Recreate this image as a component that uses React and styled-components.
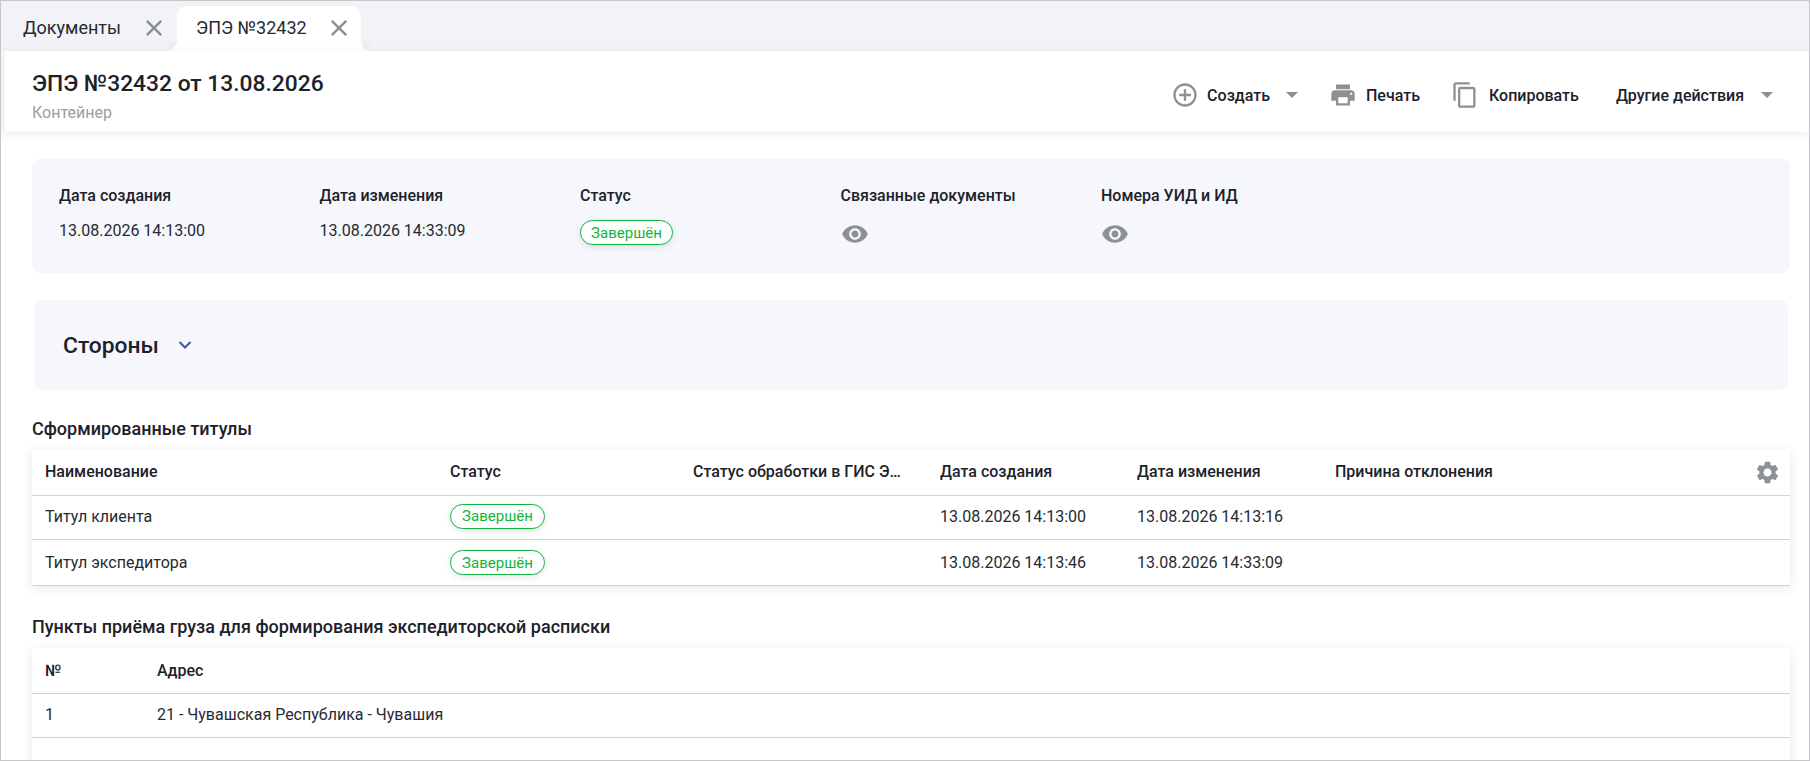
import React from "react";
import styled, { createGlobalStyle } from "styled-components";

const Global = createGlobalStyle`
  html, body { margin: 0; padding: 0; background: #fff; }
  body { font-family: Roboto, "Noto Sans", sans-serif; color: #1d2129; }
  * { box-sizing: border-box; }
`;

const Frame = styled.div`
  width: 1810px;
  height: 761px;
  border: 1px solid #c4c6ca;
  overflow: hidden;
  background: #fff;
  display: flex;
  flex-direction: column;
`;

const TabBar = styled.div`
  height: 50px;
  flex: none;
  background: #f1f3f7;
  display: flex;
  padding-top: 5px;
`;

const Tab = styled.div`
  position: relative;
  height: 45px;
  width: ${(p) => p.$width}px;
  padding: 0 0 2px ${(p) => p.$pad}px;
  display: flex;
  align-items: center;
  justify-content: space-between;
  font-size: 18px;
  color: #262a31;
  background: ${(p) => (p.$active ? "#fff" : "transparent")};
  border-radius: ${(p) => (p.$active ? "10px 10px 0 0" : "0")};
  ${(p) =>
    p.$active &&
    `
    &::before, &::after {
      content: "";
      position: absolute;
      bottom: 0;
      width: 10px;
      height: 10px;
      background: radial-gradient(circle at var(--cx) 0, #eceef3 9.5px, #fff 10px);
    }
    &::before { left: -10px; --cx: 0; }
    &::after { right: -10px; --cx: 100%; }
  `}
`;

const CloseIcon = styled.svg`
  width: 18px;
  height: 18px;
  flex: none;
  margin-right: ${(p) => p.$mr}px;
  stroke: #8a8e94;
  stroke-width: 2.4;
  fill: none;
`;

const HeaderWrap = styled.div`
  flex: none;
  background: #f1f3f7;
  padding-left: 4px;
  position: relative;
  z-index: 2;
  box-shadow: 0 2px 8px rgba(40, 50, 70, 0.1);
`;

const Header = styled.header`
  height: 81px;
  background: #fff;
  display: flex;
  justify-content: space-between;
  padding-left: 27px;
`;

const TitleBlock = styled.div`
  display: flex;
  flex-direction: column;
  padding-top: 20px;
`;

const Title = styled.h1`
  margin: 0;
  font-size: 22.8px;
  line-height: 26px;
  font-weight: 500;
  color: #1d2129;
`;

const Subtitle = styled.div`
  font-size: 16px;
  line-height: 20px;
  margin-top: 6px;
  color: #9b9ea3;
`;

const Toolbar = styled.div`
  display: flex;
  align-items: center;
  padding-top: 7px;
  padding-right: 36px;
`;

const ToolButton = styled.div`
  display: flex;
  align-items: center;
  font-size: 16px;
  font-weight: 500;
  color: #1d2129;
  margin-left: ${(p) => p.$ml}px;
`;

const ToolIcon = styled.svg`
  width: 28px;
  height: 28px;
  fill: #8d9095;
  margin-right: ${(p) => p.$mr}px;
  flex: none;
`;

const Caret = styled.span`
  width: 0;
  height: 0;
  margin-left: ${(p) => p.$ml}px;
  border-left: 6px solid transparent;
  border-right: 6px solid transparent;
  border-top: 6px solid #8d9095;
`;

const Content = styled.main`
  flex: 1;
  min-height: 0;
  padding: 27px 19px 0 31px;
  display: flex;
  flex-direction: column;
`;

const InfoCard = styled.section`
  flex: none;
  height: 114px;
  background: #f5f7fc;
  border-radius: 8px;
  padding: 27px 27px 0;
  display: grid;
  grid-template-columns: repeat(5, 260.5px);
`;

const InfoColumn = styled.div`
  display: flex;
  flex-direction: column;
`;

const InfoLabel = styled.div`
  font-size: 16px;
  line-height: 20px;
  font-weight: 500;
  color: #1d2129;
`;

const InfoValue = styled.div`
  font-size: 16px;
  line-height: 20px;
  margin-top: 15px;
  color: #262a31;
`;

const Badge = styled.span`
  display: inline-flex;
  align-items: center;
  justify-content: center;
  align-self: flex-start;
  height: 25px;
  width: ${(p) => p.$width}px;
  border: 1px solid #10b53f;
  border-radius: 13px;
  background: #fff;
  color: #10b53f;
  font-size: 15px;
  box-shadow: 0 2px 6px rgba(40, 50, 70, 0.12);
`;

const InfoBadge = styled(Badge)`
  margin-top: 14px;
`;

const EyeIcon = styled.svg`
  width: 28px;
  height: 28px;
  fill: #8d9095;
  margin-top: 14px;
`;

const SidesCard = styled.section`
  flex: none;
  height: 90px;
  margin: 27px 2px 0;
  background: #f5f7fc;
  border-radius: 8px;
  display: flex;
  align-items: center;
  padding-left: 29px;
  font-size: 22.8px;
  font-weight: 500;
  color: #1d2129;
`;

const Chevron = styled.svg`
  width: 14px;
  height: 10px;
  margin-left: 19px;
  fill: none;
  stroke: #3a5aa8;
  stroke-width: 2;
`;

const SectionTitle = styled.h2`
  flex: none;
  margin: ${(p) => p.$mt}px 0 0;
  font-size: 18px;
  line-height: 22px;
  font-weight: 500;
  color: #1d2129;
`;

const Table = styled.div`
  flex: none;
  margin-top: ${(p) => p.$mt}px;
  width: 1758px;
  background: #fff;
  box-shadow: 0 2px 10px rgba(40, 50, 70, 0.11);
`;

const Row = styled.div`
  display: grid;
  grid-template-columns: ${(p) => p.$cols};
  height: ${(p) => p.$h}px;
  padding-bottom: ${(p) => p.$pb || 0}px;
  align-items: center;
  border-bottom: 1px solid #d0d2d5;
  position: relative;
`;

const HeadCell = styled.div`
  padding: 0 20px 0 13px;
  font-size: 16px;
  font-weight: 500;
  color: #1d2129;
  white-space: nowrap;
  overflow: hidden;
  text-overflow: ellipsis;
`;

const Cell = styled.div`
  padding-left: 13px;
  font-size: 16px;
  color: #262a31;
  white-space: nowrap;
`;

const GearIcon = styled.svg`
  position: absolute;
  right: 9px;
  top: 9px;
  width: 27px;
  height: 27px;
  fill: #8d9095;
`;

const Close = ({ mr }) => (
  <CloseIcon $mr={mr} viewBox="0 0 18 18">
    <path d="M1.8 1.8 16.2 16.2M16.2 1.8 1.8 16.2" />
  </CloseIcon>
);

const Eye = () => (
  <EyeIcon viewBox="0 0 24 24">
    <path d="M12 4.5C7 4.5 2.73 7.61 1 12c1.73 4.39 6 7.5 11 7.5s9.27-3.11 11-7.5c-1.73-4.39-6-7.5-11-7.5zM12 17c-2.76 0-5-2.24-5-5s2.24-5 5-5 5 2.24 5 5-2.24 5-5 5zm0-8c-1.66 0-3 1.34-3 3s1.34 3 3 3 3-1.34 3-3-1.34-3-3-3z" />
  </EyeIcon>
);

const titleCols = "405px 243px 247px 197px 198px 1fr";
const pointCols = "112px 1fr";

const titleRows = [
  { name: "Титул клиента", created: "13.08.2026 14:13:00", changed: "13.08.2026 14:13:16", h: 44, pb: 3 },
  { name: "Титул экспедитора", created: "13.08.2026 14:13:46", changed: "13.08.2026 14:33:09", h: 46, pb: 0 },
];

export default function App() {
  return (
    <>
      <Global />
      <Frame>
        <TabBar>
          <Tab $width={176} $pad={22}>
            Документы
            <Close mr={14} />
          </Tab>
          <Tab $active $width={184} $pad={19}>
            ЭПЭ №32432
            <Close mr={13} />
          </Tab>
        </TabBar>
        <HeaderWrap>
          <Header>
            <TitleBlock>
              <Title>ЭПЭ №32432 от 13.08.2026</Title>
              <Subtitle>Контейнер</Subtitle>
            </TitleBlock>
            <Toolbar>
              <ToolButton $ml={0}>
                <ToolIcon $mr={8} viewBox="0 0 24 24">
                  <path d="M13 7h-2v4H7v2h4v4h2v-4h4v-2h-4V7zm-1-5C6.48 2 2 6.48 2 12s4.48 10 10 10 10-4.48 10-10S17.52 2 12 2zm0 18c-4.41 0-8-3.59-8-8s3.59-8 8-8 8 3.59 8 8-3.59 8-8 8z" />
                </ToolIcon>
                Создать
                <Caret $ml={16} />
              </ToolButton>
              <ToolButton $ml={31}>
                <ToolIcon $mr={9} viewBox="0 0 24 24">
                  <path d="M19 8H5c-1.66 0-3 1.34-3 3v6h4v4h12v-4h4v-6c0-1.66-1.34-3-3-3zm-3 11H8v-5h8v5zm3-7c-.55 0-1-.45-1-1s.45-1 1-1 1 .45 1 1-.45 1-1 1zm-1-9H6v4h12V3z" />
                </ToolIcon>
                Печать
              </ToolButton>
              <ToolButton $ml={31}>
                <ToolIcon $mr={10} viewBox="0 0 24 24">
                  <path d="M16 1H4c-1.1 0-2 .9-2 2v14h2V3h12V1zm3 4H8c-1.1 0-2 .9-2 2v14c0 1.1.9 2 2 2h11c1.1 0 2-.9 2-2V7c0-1.1-.9-2-2-2zm0 16H8V7h11v14z" />
                </ToolIcon>
                Копировать
              </ToolButton>
              <ToolButton $ml={37}>
                Другие действия
                <Caret $ml={17} />
              </ToolButton>
            </Toolbar>
          </Header>
        </HeaderWrap>
        <Content>
          <InfoCard>
            <InfoColumn>
              <InfoLabel>Дата создания</InfoLabel>
              <InfoValue>13.08.2026 14:13:00</InfoValue>
            </InfoColumn>
            <InfoColumn>
              <InfoLabel>Дата изменения</InfoLabel>
              <InfoValue>13.08.2026 14:33:09</InfoValue>
            </InfoColumn>
            <InfoColumn>
              <InfoLabel>Статус</InfoLabel>
              <InfoBadge $width={93}>Завершён</InfoBadge>
            </InfoColumn>
            <InfoColumn>
              <InfoLabel>Связанные документы</InfoLabel>
              <Eye />
            </InfoColumn>
            <InfoColumn>
              <InfoLabel>Номера УИД и ИД</InfoLabel>
              <Eye />
            </InfoColumn>
          </InfoCard>
          <SidesCard>
            Стороны
            <Chevron viewBox="0 0 14 10">
              <path d="M1.5 2 7 7.5 12.5 2" />
            </Chevron>
          </SidesCard>
          <SectionTitle $mt={28}>Сформированные титулы</SectionTitle>
          <Table $mt={10}>
            <Row $cols={titleCols} $h={46} $pb={3}>
              <HeadCell>Наименование</HeadCell>
              <HeadCell>Статус</HeadCell>
              <HeadCell>Статус обработки в ГИС ЭПД</HeadCell>
              <HeadCell>Дата создания</HeadCell>
              <HeadCell>Дата изменения</HeadCell>
              <HeadCell>Причина отклонения</HeadCell>
              <GearIcon viewBox="0 0 24 24">
                <path d="M19.14 12.94c.04-.3.06-.61.06-.94 0-.32-.02-.64-.07-.94l2.03-1.58c.18-.14.23-.41.12-.61l-1.92-3.32c-.12-.22-.37-.29-.59-.22l-2.39.96c-.5-.38-1.03-.7-1.62-.94l-.36-2.54c-.04-.24-.24-.41-.48-.41h-3.84c-.24 0-.43.17-.47.41l-.36 2.54c-.59.24-1.13.57-1.62.94l-2.39-.96c-.22-.08-.47 0-.59.22L2.74 8.87c-.12.21-.08.47.12.61l2.03 1.58c-.05.3-.09.63-.09.94s.02.64.07.94l-2.03 1.58c-.18.14-.23.41-.12.61l1.92 3.32c.12.22.37.29.59.22l2.39-.96c.5.38 1.03.7 1.62.94l.36 2.54c.05.24.24.41.48.41h3.84c.24 0 .44-.17.47-.41l.36-2.54c.59-.24 1.13-.56 1.62-.94l2.39.96c.22.08.47 0 .59-.22l1.92-3.32c.12-.22.07-.47-.12-.61l-2.01-1.58zM12 15.6c-1.98 0-3.6-1.62-3.6-3.6s1.62-3.6 3.6-3.6 3.6 1.62 3.6 3.6-1.62 3.6-3.6 3.6z" />
              </GearIcon>
            </Row>
            {titleRows.map((r) => (
              <Row key={r.name} $cols={titleCols} $h={r.h} $pb={r.pb}>
                <Cell>{r.name}</Cell>
                <Cell>
                  <Badge $width={95}>Завершён</Badge>
                </Cell>
                <Cell />
                <Cell>{r.created}</Cell>
                <Cell>{r.changed}</Cell>
                <Cell />
              </Row>
            ))}
          </Table>
          <SectionTitle $mt={30}>Пункты приёма груза для формирования экспедиторской расписки</SectionTitle>
          <Table $mt={10}>
            <Row $cols={pointCols} $h={46}>
              <HeadCell>№</HeadCell>
              <HeadCell>Адрес</HeadCell>
            </Row>
            <Row $cols={pointCols} $h={44} $pb={2}>
              <Cell>1</Cell>
              <Cell>21 - Чувашская Республика - Чувашия</Cell>
            </Row>
            <Row $cols={pointCols} $h={44} />
          </Table>
        </Content>
      </Frame>
    </>
  );
}
